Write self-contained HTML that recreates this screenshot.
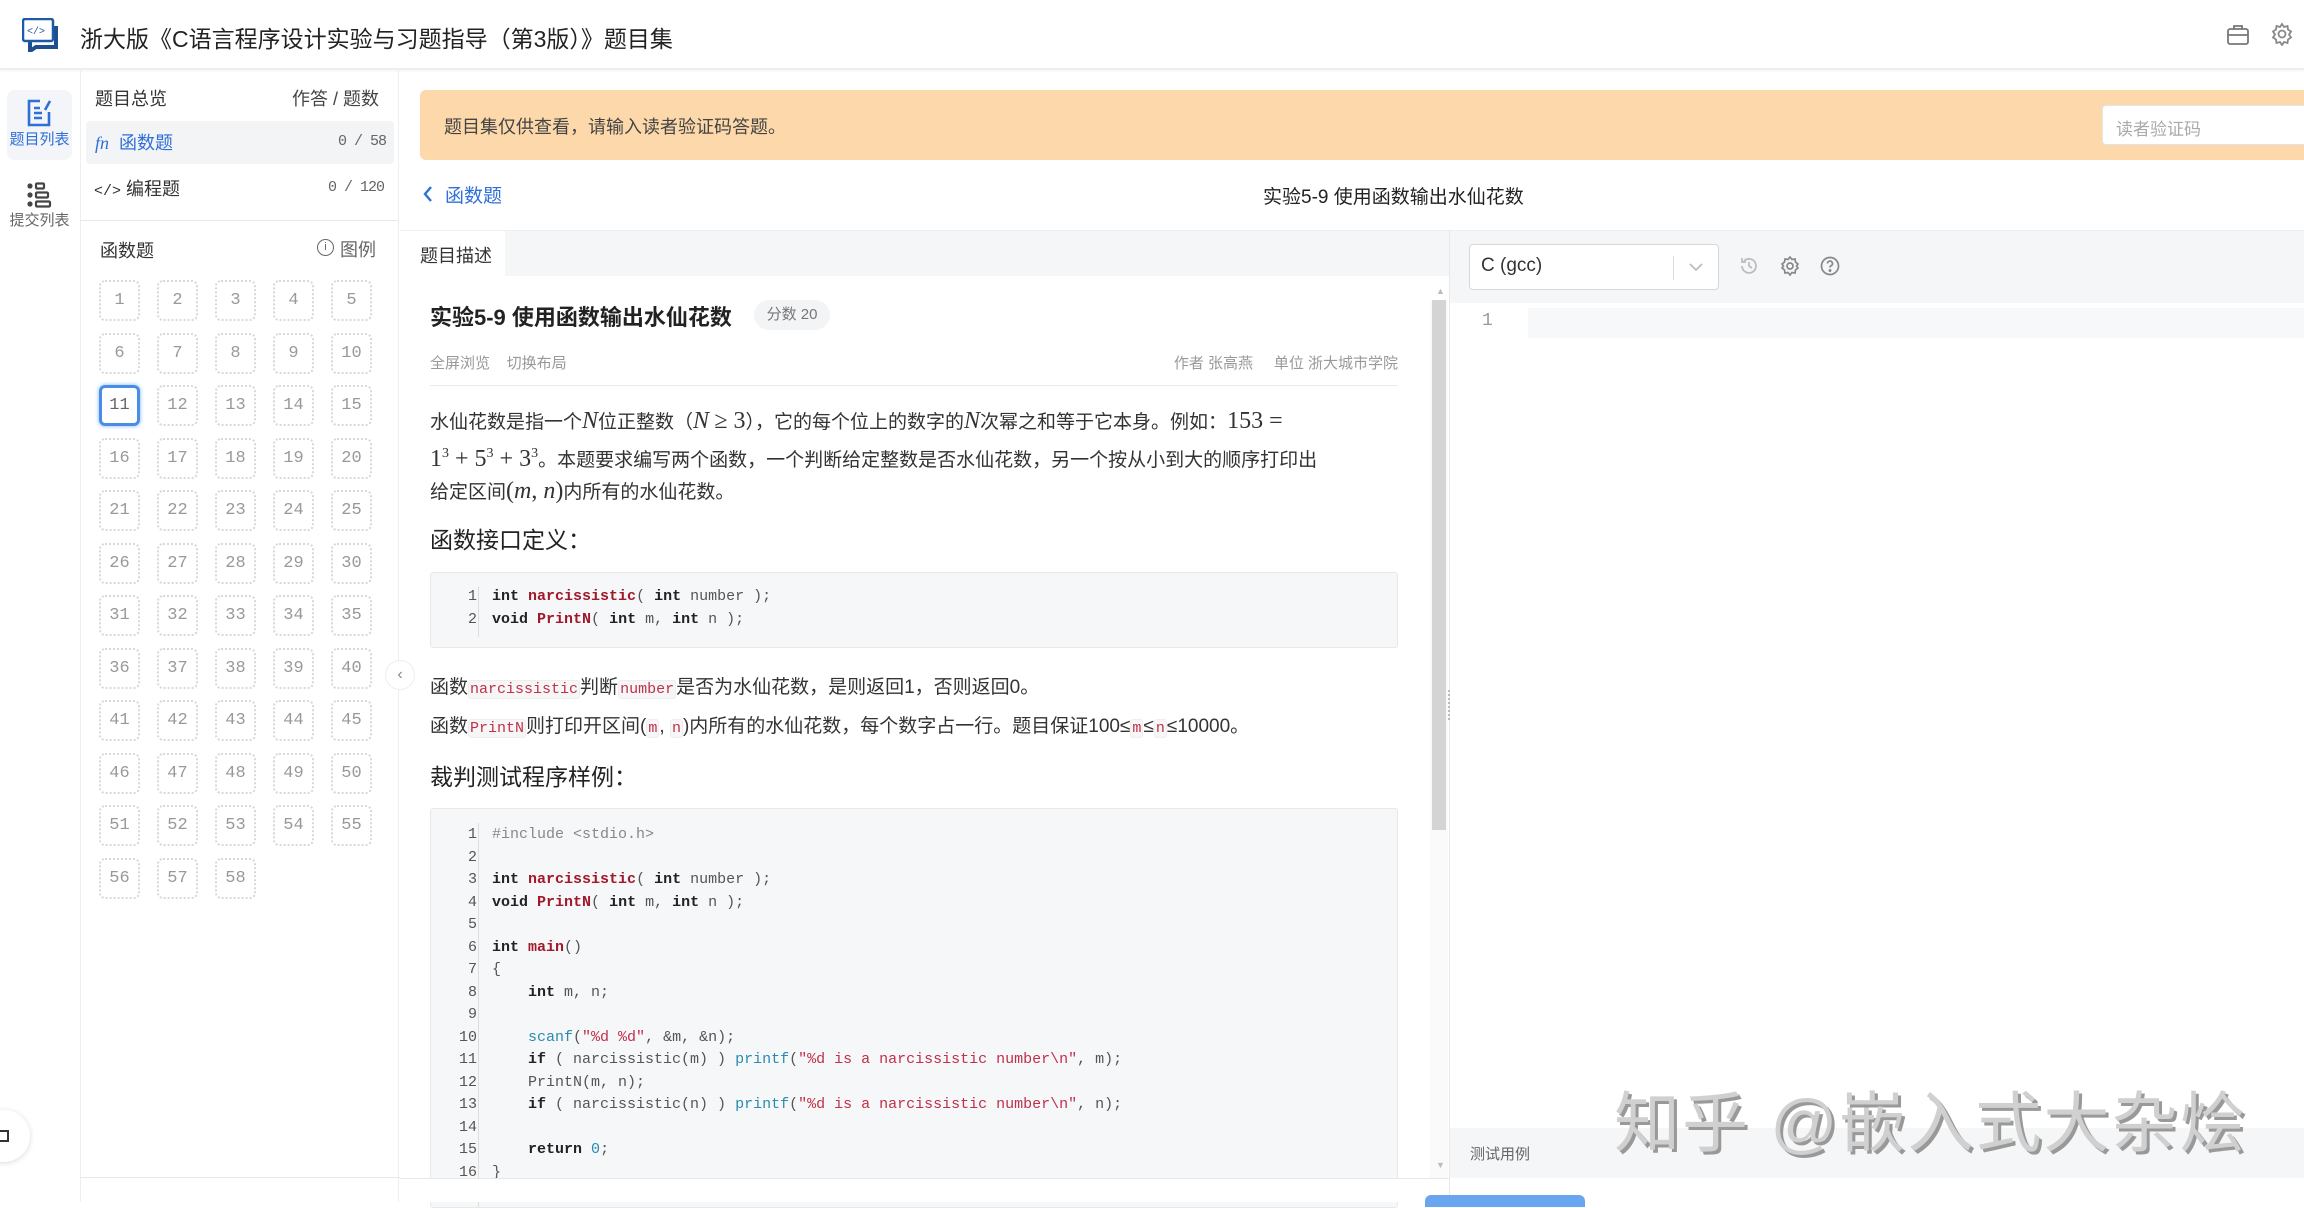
<!DOCTYPE html>
<html><head><meta charset="utf-8">
<style>
*{box-sizing:border-box;margin:0;padding:0}
body{width:2304px;height:1202px;overflow:hidden;background:#fff;font-family:"Liberation Sans","Noto Sans CJK SC",sans-serif;color:#333;position:relative}
.a{position:absolute}
.mono{font-family:"Liberation Mono","Noto Sans CJK SC",monospace}
.cell{position:absolute;width:41px;height:41px;border:2px dotted #d8d8d8;border-radius:6px;text-align:center;line-height:37px;font-family:"Liberation Mono",monospace;font-size:17px;color:#999}
.code{position:absolute;left:430px;width:968px;background:#f6f7f8;border:1px solid #e8e8e8;border-radius:3px;overflow:hidden}
.ln{position:absolute;left:0;width:46px;text-align:right;color:#555;font-family:"Liberation Mono",monospace;font-size:15px}
.cl{position:absolute;left:61px;font-family:"Liberation Mono",monospace;font-size:15px;color:#555;white-space:pre}
.k{color:#222;font-weight:bold}.f{color:#a1182a;font-weight:bold}.s{color:#c0304a}.b{color:#2a8ab0}.c{color:#888}
.ic{color:#c0304a;background:#f6f6f6;border:1px solid #eee;border-radius:3px;font-family:"Liberation Mono",monospace;font-size:15px;padding:0 1px}
.m{font-family:"Liberation Serif",serif;font-size:24px}
</style></head><body>
<!-- header -->
<div class="a" style="left:0;top:0;width:2304px;height:70px;border-bottom:2px solid #eceef0;box-shadow:0 1px 3px rgba(0,0,0,.05)"></div>
<svg class="a" style="left:22px;top:18px" width="38" height="34" viewBox="0 0 38 34"><rect x="1" y="1" width="30" height="22" rx="2" fill="#fff" stroke="#1e5aa8" stroke-width="2.5"/><path d="M8 24 L8 33 L14 29 L34 29 L34 8" fill="none" stroke="#1e4f8e" stroke-width="4"/><text x="5" y="16" font-size="10" fill="#1e5aa8" font-family="Liberation Mono">&lt;/&gt;</text></svg>
<div class="a" style="left:80px;top:20px;font-size:23px;color:#222">浙大版《C语言程序设计实验与习题指导（第3版）》题目集</div>
<svg class="a" style="left:2226px;top:24px" width="24" height="22" viewBox="0 0 24 22" fill="none" stroke="#777" stroke-width="1.8"><rect x="2" y="5" width="20" height="15" rx="2"/><path d="M8 5V2h8v3M2 11h20"/></svg>
<svg class="a" style="left:2270px;top:22px" width="24" height="24" viewBox="0 0 24 24" fill="none" stroke="#888" stroke-width="1.8"><circle cx="12" cy="12" r="3.5"/><path d="M12 2l2 3 3.5-1 .5 3.5 3 2-2 3 2 3-3 2-.5 3.5-3.5-1-2 3-2-3-3.5 1-.5-3.5-3-2 2-3-2-3 3-2 .5-3.5 3.5 1z"/></svg>

<!-- icon rail -->
<div class="a" style="left:80px;top:70px;width:1px;height:1132px;background:#eceef0"></div>
<div class="a" style="left:7px;top:90px;width:65px;height:70px;background:#f3f5f8;border-radius:8px"></div>
<svg class="a" style="left:26px;top:98px" width="26" height="30" viewBox="0 0 26 30" fill="none" stroke="#2f6fd8" stroke-width="2.6"><path d="M14 3H3v24h20V14"/><path d="M8 10h6M8 15h8M8 20h8"/><path d="M19 12l5-9"/></svg>
<div class="a" style="left:7px;top:128px;width:65px;text-align:center;font-size:15px;color:#2f6fd8">题目列表</div>
<svg class="a" style="left:26px;top:182px" width="26" height="26" viewBox="0 0 26 26" fill="#444"><circle cx="4" cy="4" r="2.6"/><circle cx="4" cy="13" r="2.6"/><circle cx="4" cy="22" r="2.6"/><rect x="10" y="1.5" width="8" height="5" rx="1" fill="none" stroke="#444" stroke-width="2.2"/><rect x="10" y="10.5" width="12" height="5" rx="1" fill="none" stroke="#444" stroke-width="2.2"/><rect x="10" y="19.5" width="14" height="5" rx="1" fill="none" stroke="#444" stroke-width="2.2"/></svg>
<div class="a" style="left:7px;top:209px;width:65px;text-align:center;font-size:15px;color:#666">提交列表</div>
<div class="a" style="left:-22px;top:1110px;width:52px;height:52px;border-radius:50%;background:#fff;box-shadow:0 1px 6px rgba(0,0,0,.15)"></div>
<div class="a" style="left:0;top:1130px;width:9px;height:12px;border:2px solid #333;border-left:none"></div>

<!-- sidebar -->
<div class="a" style="left:398px;top:70px;width:1px;height:1132px;background:#eceef0"></div>
<div class="a" style="left:95px;top:85px;font-size:18px;color:#333">题目总览</div>
<div class="a" style="left:292px;top:85px;font-size:18px;color:#444">作答 / 题数</div>
<div class="a" style="left:86px;top:121px;width:308px;height:43px;background:#f3f4f6;border-radius:4px"></div>
<div class="a" style="left:95px;top:129px;font-size:18px;color:#2f6fd8"><i style="font-family:'Liberation Serif',serif">fn</i>&nbsp; 函数题</div>
<div class="a mono" style="left:338px;top:133px;font-size:15px;color:#666;letter-spacing:-1px">0 / 58</div>
<div class="a" style="left:94px;top:175px;font-size:18px;color:#333"><span class="mono" style="font-size:15px">&lt;/&gt;</span>&nbsp;编程题</div>
<div class="a mono" style="left:328px;top:179px;font-size:15px;color:#666;letter-spacing:-1px">0 / 120</div>
<div class="a" style="left:80px;top:220px;width:318px;height:1px;background:#e8e8e8"></div>
<div class="a" style="left:100px;top:237px;font-size:18px;color:#333">函数题</div>
<div class="a" style="left:317px;top:239px;width:17px;height:17px;border:1.5px solid #666;border-radius:50%;font-size:11px;text-align:center;line-height:14px;color:#666">i</div>
<div class="a" style="left:340px;top:236px;font-size:18px;color:#666">图例</div>
<div id="grid"></div>
<div class="a" style="left:385px;top:660px;width:30px;height:30px;border-radius:50%;background:#fff;border:1px solid #eee;text-align:center;line-height:28px;color:#888;font-size:16px">‹</div>
<div class="a" style="left:80px;top:1177px;width:320px;height:1px;background:#e8e8e8"></div>

<!-- banner -->
<div class="a" style="left:420px;top:90px;width:1884px;height:70px;background:#fdd8aa;border-radius:6px 0 0 6px"></div>
<div class="a" style="left:444px;top:113px;font-size:18px;color:#444">题目集仅供查看，请输入读者验证码答题。</div>
<div class="a" style="left:2102px;top:105px;width:210px;height:40px;background:#fff;border:1px solid #e4e4e4;border-radius:4px;padding:9px 13px;font-size:17px;color:#aaa">读者验证码</div>

<!-- back row -->
<svg class="a" style="left:422px;top:185px" width="12" height="18" viewBox="0 0 12 18"><path d="M9 2L3 9l6 7" fill="none" stroke="#2f6fd8" stroke-width="2.4"/></svg>
<div class="a" style="left:445px;top:181px;font-size:19px;color:#2f6fd8">函数题</div>
<div class="a" style="left:1263px;top:182px;font-size:19px;color:#222">实验5-9 使用函数输出水仙花数</div>

<!-- tab bar -->
<div class="a" style="left:400px;top:230px;width:1050px;height:46px;background:#f5f6f7;border-top:1px solid #eceef0"></div>
<div class="a" style="left:400px;top:231px;width:105px;height:45px;background:#fff"></div>
<div class="a" style="left:420px;top:242px;font-size:18px;color:#333">题目描述</div>

<!-- problem -->
<div class="a" style="left:430px;top:300px;font-size:22px;color:#222;font-weight:bold">实验5-9 使用函数输出水仙花数</div>
<div class="a" style="left:754px;top:300px;width:76px;height:30px;background:#f3f4f6;border-radius:15px;font-size:15px;color:#777;text-align:center;line-height:30px">分数 20</div>
<div class="a" style="left:430px;top:352px;font-size:15px;color:#999">全屏浏览&nbsp;&nbsp;&nbsp; 切换布局</div>
<div class="a" style="left:1153px;top:352px;width:245px;text-align:right;font-size:15px;color:#999;white-space:nowrap">作者 张高燕&nbsp;&nbsp;&nbsp;&nbsp; 单位 浙大城市学院</div>
<div class="a" style="left:430px;top:385px;width:968px;height:1px;background:#ebebeb"></div>
<div class="a" style="left:430px;top:406px;width:975px;font-size:19px;line-height:31px;color:#333">水仙花数是指一个<i class="m">N</i>位正整数（<i class="m">N</i> <span class="m">≥ 3</span>），它的每个位上的数字的<i class="m">N</i>次幂之和等于它本身。例如：<span class="m">153 =</span><br><span class="m">1<sup style="font-size:14px">3</sup> + 5<sup style="font-size:14px">3</sup> + 3<sup style="font-size:14px">3</sup></span>。本题要求编写两个函数，一个判断给定整数是否水仙花数，另一个按从小到大的顺序打印出<br>给定区间<span class="m">(<i>m</i>, <i>n</i>)</span>内所有的水仙花数。</div>
<div class="a" style="left:430px;top:521px;font-size:23px;color:#222">函数接口定义：</div>
<div class="code" style="top:572px;height:76px">
<div class="a" style="left:47px;top:14px;width:1px;height:50px;background:#ddd"></div>
<div class="ln" style="top:15px">1</div><div class="cl" style="top:15px"><span class="k">int</span> <span class="f">narcissistic</span>( <span class="k">int</span> number );</div>
<div class="ln" style="top:38px">2</div><div class="cl" style="top:38px"><span class="k">void</span> <span class="f">PrintN</span>( <span class="k">int</span> m, <span class="k">int</span> n );</div>
</div>
<div class="a" style="left:430px;top:672px;font-size:19px;color:#333">函数<span class="ic">narcissistic</span>判断<span class="ic">number</span>是否为水仙花数，是则返回1，否则返回0。</div>
<div class="a" style="left:430px;top:711px;font-size:19px;color:#333">函数<span class="ic">PrintN</span>则打印开区间(<span class="ic">m</span>, <span class="ic">n</span>)内所有的水仙花数，每个数字占一行。题目保证100≤<span class="ic">m</span>≤<span class="ic">n</span>≤10000。</div>
<div class="a" style="left:430px;top:758px;font-size:23px;color:#222">裁判测试程序样例：</div>
<div class="code" style="top:808px;height:400px">
<div class="a" style="left:47px;top:14px;width:1px;height:390px;background:#ddd"></div>
<div class="ln" style="top:17px">1</div><div class="cl c" style="top:17px">#include &lt;stdio.h&gt;</div>
<div class="ln" style="top:40px">2</div>
<div class="ln" style="top:62px">3</div><div class="cl" style="top:62px"><span class="k">int</span> <span class="f">narcissistic</span>( <span class="k">int</span> number );</div>
<div class="ln" style="top:85px">4</div><div class="cl" style="top:85px"><span class="k">void</span> <span class="f">PrintN</span>( <span class="k">int</span> m, <span class="k">int</span> n );</div>
<div class="ln" style="top:107px">5</div>
<div class="ln" style="top:130px">6</div><div class="cl" style="top:130px"><span class="k">int</span> <span class="f">main</span>()</div>
<div class="ln" style="top:152px">7</div><div class="cl" style="top:152px">{</div>
<div class="ln" style="top:175px">8</div><div class="cl" style="top:175px">    <span class="k">int</span> m, n;</div>
<div class="ln" style="top:197px">9</div>
<div class="ln" style="top:220px">10</div><div class="cl" style="top:220px">    <span class="b">scanf</span>(<span class="s">"%d %d"</span>, &amp;m, &amp;n);</div>
<div class="ln" style="top:242px">11</div><div class="cl" style="top:242px">    <span class="k">if</span> ( narcissistic(m) ) <span class="b">printf</span>(<span class="s">"%d is a narcissistic number\n"</span>, m);</div>
<div class="ln" style="top:265px">12</div><div class="cl" style="top:265px">    PrintN(m, n);</div>
<div class="ln" style="top:287px">13</div><div class="cl" style="top:287px">    <span class="k">if</span> ( narcissistic(n) ) <span class="b">printf</span>(<span class="s">"%d is a narcissistic number\n"</span>, n);</div>
<div class="ln" style="top:310px">14</div>
<div class="ln" style="top:332px">15</div><div class="cl" style="top:332px">    <span class="k">return</span> <span class="b">0</span>;</div>
<div class="ln" style="top:355px">16</div><div class="cl" style="top:355px">}</div>
</div>
<div class="a" style="left:400px;top:1178px;width:1050px;height:24px;background:#fff;border-top:1px solid #e8e8e8"></div>
<!-- scrollbar -->
<div class="a" style="left:1430px;top:301px;width:18px;height:877px;background:#fafafa"></div>
<div class="a" style="left:1432px;top:300px;width:14px;height:530px;background:#d4d4d4"></div>
<div class="a" style="left:1436px;top:286px;font-size:9px;color:#bbb">▲</div>
<div class="a" style="left:1436px;top:1160px;font-size:9px;color:#bbb">▼</div>

<!-- right panel -->
<div class="a" style="left:1449px;top:230px;width:1px;height:972px;background:#e8e8e8"></div>
<div class="a" style="left:1450px;top:230px;width:854px;height:73px;background:#f5f6f7;border-top:1px solid #eceef0"></div>
<div class="a" style="left:1469px;top:244px;width:250px;height:46px;background:#fff;border:1px solid #d8d8d8;border-radius:4px"></div>
<div class="a" style="left:1481px;top:255px;font-size:19px;color:#333">C (gcc)</div>
<div class="a" style="left:1673px;top:256px;width:1px;height:24px;background:#ddd"></div>
<svg class="a" style="left:1688px;top:261px" width="16" height="12" viewBox="0 0 16 12"><path d="M2 3l6 6 6-6" fill="none" stroke="#bbb" stroke-width="1.6"/></svg>
<svg class="a" style="left:1738px;top:255px" width="22" height="22" viewBox="0 0 22 22" fill="none" stroke="#bbb" stroke-width="1.7"><path d="M4 11a7 7 0 1 0 2-5"/><path d="M4 3v4h4M11 7v4l3 2"/></svg>
<svg class="a" style="left:1779px;top:255px" width="22" height="22" viewBox="0 0 22 22" fill="none" stroke="#888" stroke-width="1.7"><circle cx="11" cy="11" r="3"/><path d="M11 2l2 2.5 3-.5.5 3 2.5 2-1.5 2 1.5 2-2.5 2-.5 3-3-.5-2 2.5-2-2.5-3 .5-.5-3-2.5-2 1.5-2-1.5-2 2.5-2 .5-3 3 .5z"/></svg>
<svg class="a" style="left:1819px;top:255px" width="22" height="22" viewBox="0 0 22 22" fill="none" stroke="#888" stroke-width="1.7"><circle cx="11" cy="11" r="8.5"/><path d="M8.5 8.5a2.5 2.5 0 1 1 3.5 2.3c-.8.4-1 .9-1 1.7"/><circle cx="11" cy="15.5" r=".6" fill="#888"/></svg>
<div class="a" style="left:1528px;top:308px;width:776px;height:30px;background:#f7f8f9"></div>
<div class="a" style="left:1482px;top:311px;font-size:18px;color:#999;font-family:'Liberation Mono',monospace">1</div>
<div class="a" style="left:1450px;top:1128px;width:854px;height:50px;background:#f5f6f7"></div>
<div class="a" style="left:1470px;top:1143px;font-size:15px;color:#666">测试用例</div>
<div class="a" style="left:1425px;top:1195px;width:160px;height:12px;background:#6aa6f0;border-radius:6px 6px 0 0"></div>
<div class="a" style="left:1448px;top:690px;width:4px;height:30px;border-left:2px dotted #bbb"></div>
<!-- watermark -->
<div class="a" style="left:1614px;top:1070px;font-size:66px;color:#d0d0d0;text-shadow:3px 3px 0 #999;letter-spacing:2px;white-space:nowrap">知乎 @嵌入式大杂烩</div>

<script>
var g=document.getElementById('grid'),h='',xs=[99,157,215,273,331];
for(var i=1;i<=58;i++){var r=Math.floor((i-1)/5),c=(i-1)%5,y=280+r*52.5;
var st=i==11?'border:3px solid #4a8de6;box-shadow:0 0 4px #7ab0f0;color:#666;line-height:35px':'';
h+='<div class="cell" style="left:'+xs[c]+'px;top:'+y+'px;'+st+'">'+i+'</div>';}
g.innerHTML=h;
</script>
</body></html>
